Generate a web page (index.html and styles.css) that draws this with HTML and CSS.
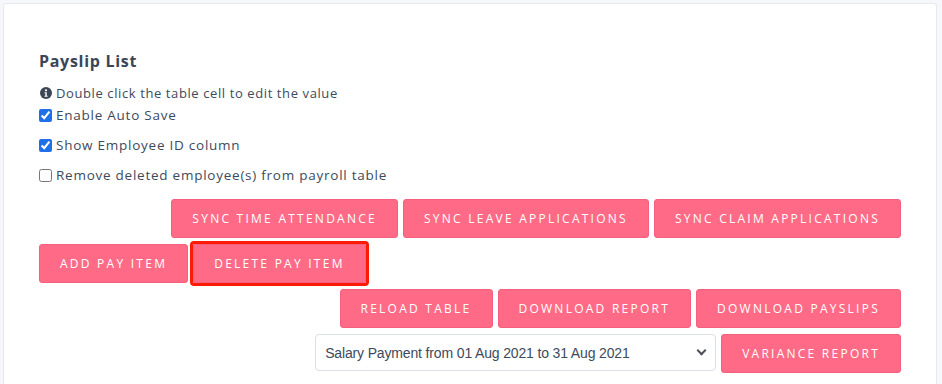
FILE: index.html
```html
<!DOCTYPE html>
<html lang="en">
<head>
    <meta charset="UTF-8" />
    <meta name="viewport" content="width=device-width, initial-scale=1" />
    <title>Payslip List</title>
    <link rel="stylesheet" href="styles.css">
</head>
<body>

<div class="card">
    <h3 class="card-title">Payslip List</h3>

    <p class="hint">
        <svg class="info-icon" viewBox="0 0 16 16" width="12" height="12">
            <circle cx="8" cy="8" r="8" fill="#3d4655"/>
            <circle cx="8" cy="4.4" r="1.5" fill="#fff"/>
            <path d="M6 7h3v4.6h1.1V13H6v-1.4h1.1V8.4H6z" fill="#fff"/>
        </svg>
        Double click the table cell to edit the value
    </p>

    <label class="check"><input type="checkbox" checked> Enable Auto Save</label>
    <label class="check"><input type="checkbox" checked> Show Employee ID column</label>
    <label class="check"><input type="checkbox"> Remove deleted employee(s) from payroll table</label>

    <div class="btn-row right first">
        <button class="btn">Sync Time Attendance</button>
        <button class="btn">Sync Leave Applications</button>
        <button class="btn">Sync Claim Applications</button>
    </div>

    <div class="btn-row">
        <button class="btn">Add Pay Item</button>
        <button class="btn focused">Delete Pay Item</button>
    </div>

    <div class="btn-row right">
        <button class="btn">Reload Table</button>
        <button class="btn">Download Report</button>
        <button class="btn">Download Payslips</button>
    </div>

    <div class="btn-row right">
        <div class="select-wrap">
            <select class="period">
                <option>Salary Payment from 01 Aug 2021 to 31 Aug 2021</option>
            </select>
        </div>
        <button class="btn">Variance Report</button>
    </div>
</div>

</body>
</html>
```

FILE: styles.css
```css
body {
    margin: 0;
    background: #f6f7fa;
    font-family: "Open Sans", "Noto Sans", sans-serif;
    color: #3d4a5c;
}
.card {
    margin: 3px 5px 0 3px;
    background: #fff;
    border: 1px solid #e8e9ee;
    border-bottom: none;
    border-radius: 3px 3px 0 0;
    padding: 46px 35px 20px 35px;
    min-height: 340px;
    display: flex;
    flex-direction: column;
}
.card-title {
    margin: 0 0 12px;
    font-size: 16px;
    font-weight: 700;
    letter-spacing: 0.7px;
    color: #3a4656;
}
.hint {
    margin: 0 0 4px;
    font-size: 13px;
    letter-spacing: 0.6px;
    display: flex;
    align-items: center;
    gap: 4px;
}
.info-icon {
    flex: none;
    margin-left: 1px;
}
.check {
    display: flex;
    align-items: center;
    gap: 4px;
    font-size: 13.5px;
    letter-spacing: 0.75px;
    height: 18px;
    margin-bottom: 12px;
}
.check input {
    margin: 0;
    width: 13px;
    height: 13px;
    accent-color: #1f6fe8;
}
.btn-row {
    display: flex;
    gap: 5px;
    margin-top: 1px;
    margin-bottom: 5px;
}
.btn-row.first {
    margin-top: 3px;
}
.btn-row.right {
    justify-content: flex-end;
}
.btn {
    height: 39px;
    padding: 0 20px;
    background: #ff6b86;
    border: 1px solid #f4607d;
    border-radius: 3px;
    color: #fff;
    font-family: "Open Sans", "Noto Sans", sans-serif;
    font-size: 12px;
    font-weight: 500;
    letter-spacing: 2.25px;
    text-transform: uppercase;
    cursor: pointer;
}
.btn.focused {
    outline: 3px solid #ff1a05;
    outline-offset: 0;
    border-radius: 1px;
}
.select-wrap {
    position: relative;
    width: 401px;
    height: 37px;
}
.select-wrap::after {
    content: "";
    position: absolute;
    right: 11px;
    top: 13px;
    width: 5px;
    height: 5px;
    border-right: 2px solid #4a4f58;
    border-bottom: 2px solid #4a4f58;
    transform: rotate(45deg);
    pointer-events: none;
}
.period {
    appearance: none;
    width: 100%;
    height: 100%;
    padding: 0 28px 0 9px;
    background: #fff;
    border: 1px solid #dcdfe5;
    border-radius: 4px;
    font-family: "Liberation Sans", Arial, sans-serif;
    font-size: 14px;
    letter-spacing: -0.15px;
    color: #3d4a5c;
}
```
